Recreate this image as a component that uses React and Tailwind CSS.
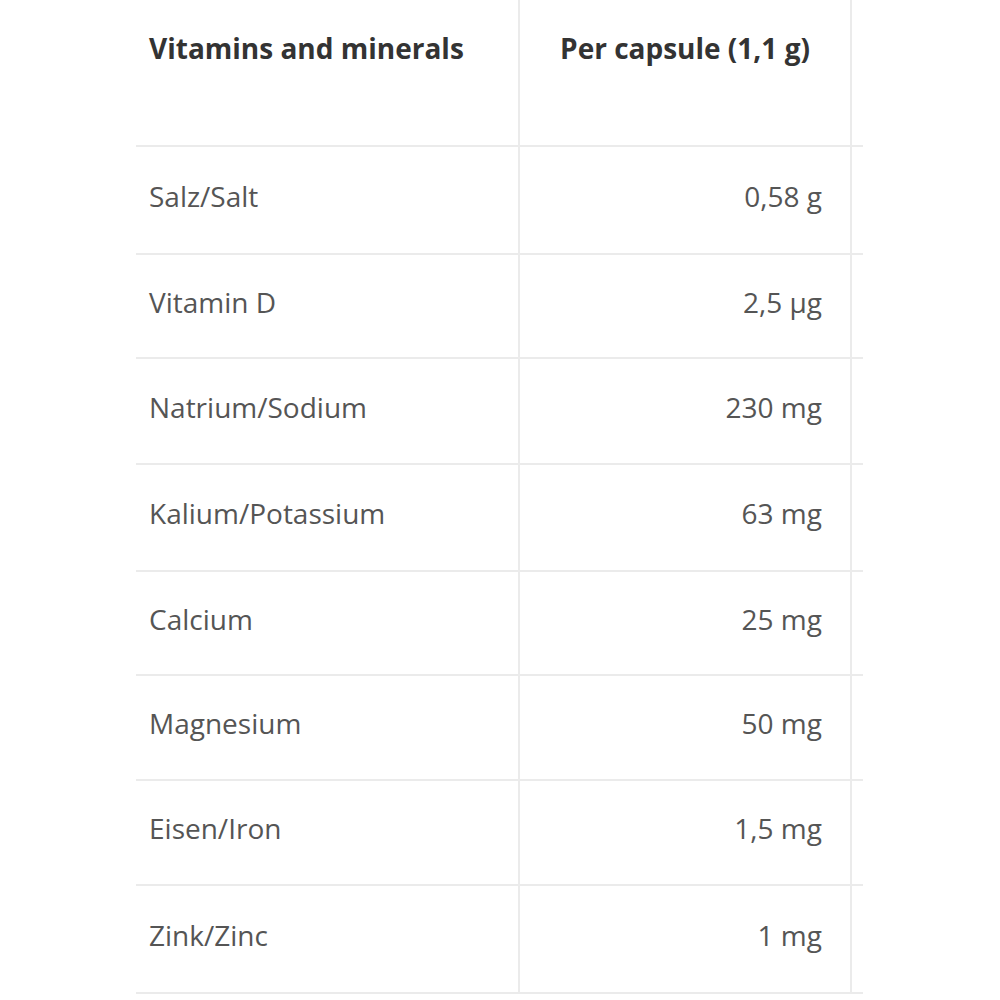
const rows = [
  ['Salz/Salt', '0,58 g', 'h-[108px]'],
  ['Vitamin D', '2,5 µg', 'h-[104px]'],
  ['Natrium/Sodium', '230 mg', 'h-[106px]'],
  ['Kalium/Potassium', '63 mg', 'h-[107px]'],
  ['Calcium', '25 mg', 'h-[104px]'],
  ['Magnesium', '50 mg', 'h-[105px]'],
  ['Eisen/Iron', '1,5 mg', 'h-[105px]'],
  ['Zink/Zinc', '1 mg', 'h-[108px]'],
];

export default function App() {
  return (
    <div className="w-[1000px] h-[1000px] bg-white overflow-hidden font-['Open_Sans',sans-serif]">
      <div className="ml-[136px] w-[727px]">
        <div className="flex h-[147px] border-b-2 border-[#ebebeb]">
          <div className="w-[384px] border-r-2 border-[#ebebeb] pl-[13px] pt-[27px] text-[28px] font-bold text-[#333]">
            Vitamins and minerals
          </div>
          <div className="w-[332px] border-r-2 border-[#ebebeb] pt-[27px] text-center text-[28px] font-bold text-[#333]">
            Per capsule (1,1 g)
          </div>
        </div>
        {rows.map(([name, value, h]) => (
          <div key={name} className={`flex ${h} border-b-2 border-[#ebebeb]`}>
            <div className="w-[384px] border-r-2 border-[#ebebeb] pl-[13px] pb-[9px] flex items-center text-[28px] text-[#555]">
              {name}
            </div>
            <div className="w-[332px] border-r-2 border-[#ebebeb] pr-[28px] pb-[9px] flex items-center justify-end text-[28px] text-[#555]">
              {value}
            </div>
          </div>
        ))}
      </div>
    </div>
  );
}
